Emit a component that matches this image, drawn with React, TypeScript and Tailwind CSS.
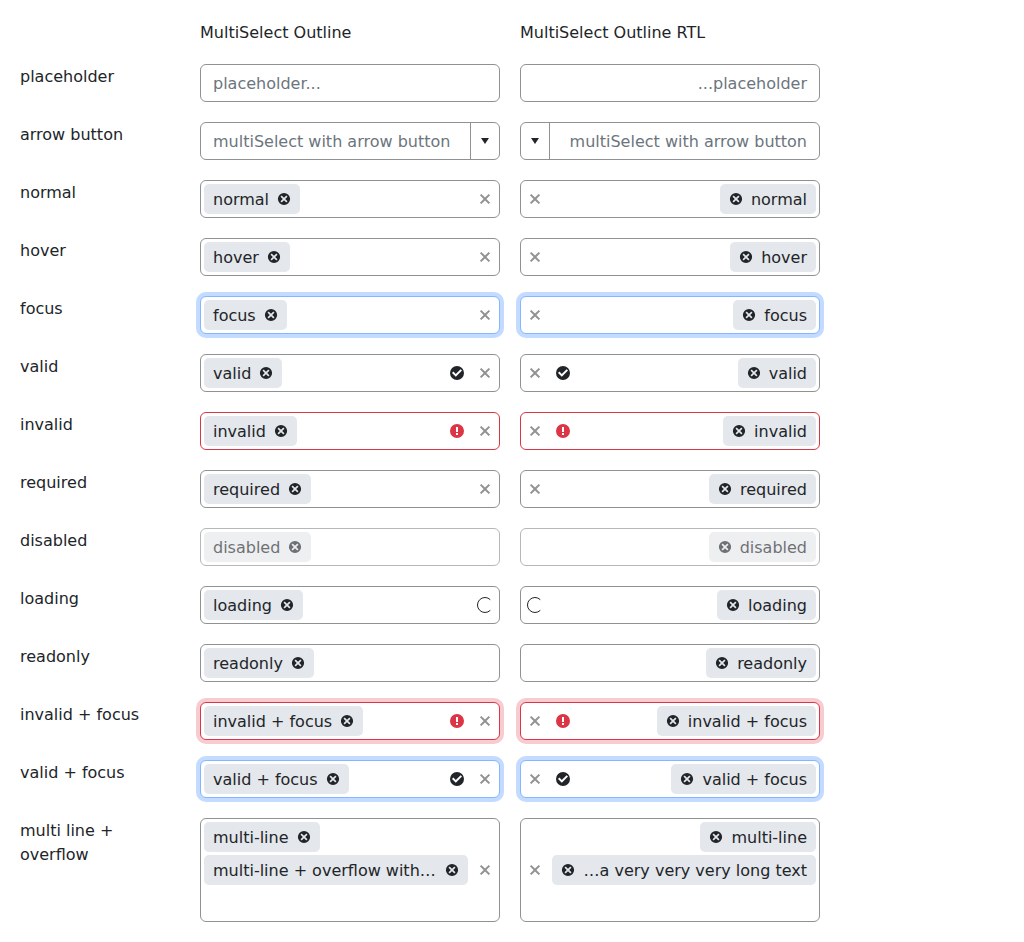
import React from 'react';

type State = 'default' | 'focus' | 'invalid' | 'invalidFocus' | 'disabled';

interface Row {
  label: string;
  chips?: string[];
  rtlChips?: string[];
  placeholder?: string;
  state?: State;
  status?: 'valid' | 'invalid';
  clear?: boolean;
  loading?: boolean;
  arrow?: boolean;
  tall?: boolean;
}

const rows: Row[] = [
  { label: 'placeholder', placeholder: 'placeholder...' },
  { label: 'arrow button', placeholder: 'multiSelect with arrow button', arrow: true },
  { label: 'normal', chips: ['normal'], clear: true },
  { label: 'hover', chips: ['hover'], clear: true },
  { label: 'focus', chips: ['focus'], clear: true, state: 'focus' },
  { label: 'valid', chips: ['valid'], clear: true, status: 'valid' },
  { label: 'invalid', chips: ['invalid'], clear: true, status: 'invalid', state: 'invalid' },
  { label: 'required', chips: ['required'], clear: true },
  { label: 'disabled', chips: ['disabled'], state: 'disabled' },
  { label: 'loading', chips: ['loading'], loading: true },
  { label: 'readonly', chips: ['readonly'] },
  { label: 'invalid + focus', chips: ['invalid + focus'], clear: true, status: 'invalid', state: 'invalidFocus' },
  { label: 'valid + focus', chips: ['valid + focus'], clear: true, status: 'valid', state: 'focus' },
  {
    label: 'multi line + overflow',
    chips: ['multi-line', 'multi-line + overflow with…'],
    rtlChips: ['multi-line', '…a very very very long text'],
    clear: true,
    tall: true,
  },
];

const stateClasses: Record<State, string> = {
  default: 'border-[#8f9193]',
  focus: 'border-[#86b6fe] shadow-[0_0_0_4px_rgba(13,110,253,0.25)]',
  invalid: 'border-[#dc3545]',
  invalidFocus: 'border-[#dc3545] shadow-[0_0_0_4px_rgba(220,53,69,0.25)]',
  disabled: 'border-[#8f9193] opacity-65',
};

function Icon({ d, className = '' }: { d: string; className?: string }) {
  return (
    <svg viewBox="0 0 16 16" className={`size-4 shrink-0 fill-current ${className}`} aria-hidden="true">
      <path fillRule="evenodd" d={d} />
    </svg>
  );
}

const icons = {
  x: 'M4.3 2.9 8 6.6l3.7-3.7 1.4 1.4L9.4 8l3.7 3.7-1.4 1.4L8 9.4l-3.7 3.7-1.4-1.4L6.6 8 2.9 4.3z',
  xCircle:
    'M8 1.9a6.1 6.1 0 1 0 0 12.2A6.1 6.1 0 0 0 8 1.9zM5.7 4.5 8 6.8l2.3-2.3 1.2 1.2L9.2 8l2.3 2.3-1.2 1.2L8 9.2l-2.3 2.3-1.2-1.2L6.8 8 4.5 5.7z',
  check: 'M8 1a7 7 0 1 0 0 14A7 7 0 0 0 8 1zM6.8 11.8 3 8l1.4-1.4 2.4 2.4 4.8-4.8L13 5.6z',
  exclamation: 'M8 1a7 7 0 1 0 0 14A7 7 0 0 0 8 1zM9 12H7v-2h2zM9 9H7V4h2z',
  caret: 'M4 5h8l-4 6z',
};

function Slot({ children }: { children: React.ReactNode }) {
  return <span className="flex w-7 shrink-0 items-center justify-center">{children}</span>;
}

function Chip({ text, fill }: { text: string; fill: boolean }) {
  return (
    <span
      className={`flex h-[30px] items-center rounded-[5px] bg-[#e4e7eb] ps-[9px] pe-2 ${fill ? 'w-full justify-between' : ''}`}
    >
      <bdi dir="ltr" className="pt-0.5 whitespace-nowrap">{text}</bdi>
      <Icon d={icons.xCircle} className="ms-[7px]" />
    </span>
  );
}

function MultiSelect({ row, rtl = false }: { row: Row; rtl?: boolean }) {
  const chips = (rtl && row.rtlChips) || row.chips;
  return (
    <div
      dir={rtl ? 'rtl' : 'ltr'}
      className={`flex rounded-md border bg-white ${row.tall ? 'h-[104px]' : 'h-[38px]'} ${stateClasses[row.state ?? 'default']}`}
    >
      {chips ? (
        <div className="flex min-w-0 grow flex-wrap content-start gap-[3px] p-[3px]">
          {chips.map((text, i) => (
            <Chip key={text} text={text} fill={i > 0} />
          ))}
        </div>
      ) : (
        <span className="grow px-3 pt-[7px] whitespace-nowrap text-[#6c757d]">{row.placeholder}</span>
      )}
      {row.status && (
        <Slot>
          <Icon
            d={row.status === 'valid' ? icons.check : icons.exclamation}
            className={row.status === 'valid' ? '' : 'text-[#dc3545]'}
          />
        </Slot>
      )}
      {row.clear && (
        <Slot>
          <Icon d={icons.x} className="text-[#909294]" />
        </Slot>
      )}
      {row.loading && (
        <Slot>
          <svg viewBox="0 0 16 16" className="size-4 fill-none stroke-current" aria-hidden="true">
            <path d="M13.3 2.7A7.5 7.5 0 1 0 13.3 13.3" />
          </svg>
        </Slot>
      )}
      {row.arrow && (
        <span className="flex w-[29px] shrink-0 items-center justify-center border-s border-[#8f9193]">
          <Icon d={icons.caret} />
        </span>
      )}
    </div>
  );
}

export default function App() {
  return (
    <main className="grid min-h-[942px] grid-cols-[160px_300px_300px] content-start gap-5 bg-white p-5 font-['DejaVu_Sans',sans-serif] text-base text-[#212529]">
      <span />
      <span className="h-6 pt-px">MultiSelect Outline</span>
      <span className="h-6 pt-px">MultiSelect Outline RTL</span>
      {rows.map((row) => (
        <React.Fragment key={row.label}>
          <span className="pt-px">{row.label}</span>
          <MultiSelect row={row} />
          <MultiSelect row={row} rtl />
        </React.Fragment>
      ))}
    </main>
  );
}
